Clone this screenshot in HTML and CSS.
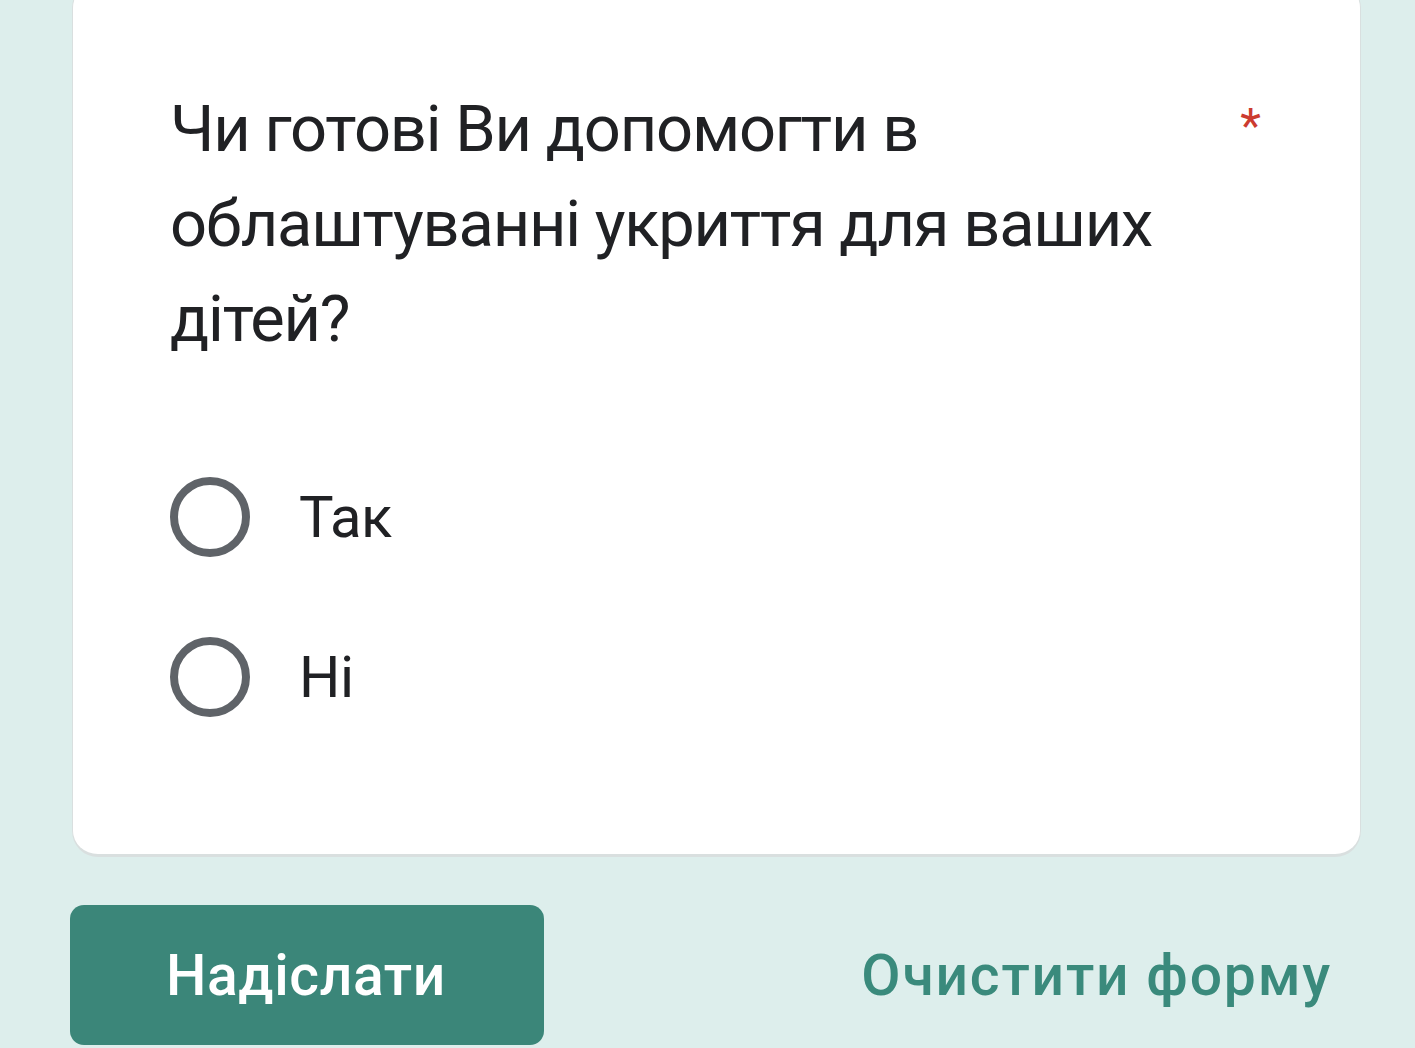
FILE: index.html
```html
<!DOCTYPE html>
<html lang="uk">
<head>
    <meta charset="UTF-8">
    <meta name="viewport" content="width=device-width, initial-scale=1.0">
    <title>Форма</title>
    <link rel="stylesheet" href="styles.css">
</head>
<body>
    <main class="form-page">
        <section class="question-card">
            <div class="question-header">
                <h2 class="question-title">Чи готові Ви допомогти в облаштуванні укриття для ваших дітей?</h2>
                <span class="required-mark">*</span>
            </div>

            <div class="options">
                <label class="option">
                    <span class="radio"></span>
                    <span class="option-label">Так</span>
                </label>
                <label class="option">
                    <span class="radio"></span>
                    <span class="option-label">Ні</span>
                </label>
            </div>
        </section>

        <div class="form-actions">
            <button class="btn-submit">Надіслати</button>
            <button class="btn-clear">Очистити форму</button>
        </div>
    </main>
</body>
</html>
```

FILE: styles.css
```css
* {
    margin: 0;
    padding: 0;
    box-sizing: border-box;
}

body {
    font-family: Roboto, 'Noto Sans', Arial, sans-serif;
    background-color: #ddeeec;
    color: #202124;
    overflow: hidden;
}

.form-page {
    padding: 0 54px 0 70px;
}

/* 質問カード */
.question-card {
    margin-top: -18px;
    margin-left: 2px;
    background: white;
    border-radius: 26px;
    border: 1px solid #d9dfdf;
    border-width: 0 1px 3px 1px;
    padding: 100px 0 137px 97px;
}

.question-header {
    display: flex;
    justify-content: space-between;
}

.question-title {
    width: 1050px;
    font-size: 65px;
    font-weight: 400;
    line-height: 95px;
    letter-spacing: -1.2px;
    color: #202124;
}

.required-mark {
    margin: 14px 99px 0 0;
    font-size: 48px;
    line-height: 60px;
    color: #cc3b30;
}

.options {
    display: flex;
    flex-direction: column;
    gap: 80px;
    margin-top: 110px;
}

.option {
    display: flex;
    align-items: center;
    gap: 49px;
}

.radio {
    width: 80px;
    height: 80px;
    border: 8px solid #5f6368;
    border-radius: 50%;
}

.option-label {
    font-size: 58px;
    line-height: 80px;
    letter-spacing: -0.5px;
    color: #202124;
}

/* ボタン */
.form-actions {
    display: flex;
    justify-content: space-between;
    align-items: center;
    margin-top: 48px;
}

.btn-submit {
    width: 474px;
    height: 140px;
    padding-left: 96px;
    text-align: left;
    background-color: #3b8679;
    color: white;
    border: none;
    border-radius: 14px;
    font-family: Roboto, 'Noto Sans', Arial, sans-serif;
    font-size: 57px;
    font-weight: 500;
    letter-spacing: 0.6px;
}

.btn-clear {
    margin-right: 29px;
    background: none;
    border: none;
    color: #3a8a7c;
    font-family: Roboto, 'Noto Sans', Arial, sans-serif;
    font-size: 57px;
    font-weight: 500;
    letter-spacing: 1.8px;
}
```
